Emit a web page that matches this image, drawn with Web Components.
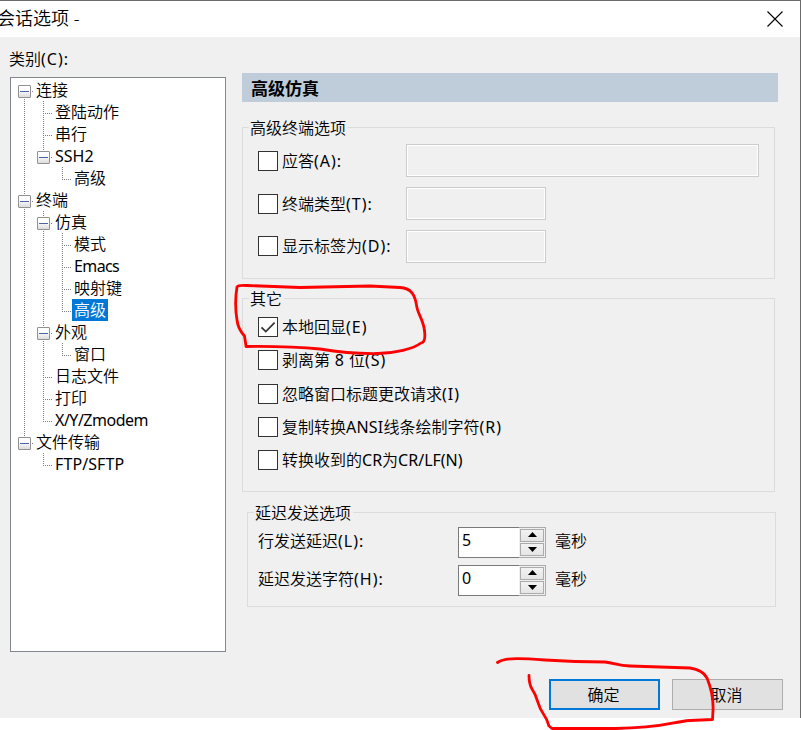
<!DOCTYPE html>
<html lang="zh-CN">
<head>
<meta charset="utf-8">
<title>会话选项</title>
<style>
body{margin:0;width:801px;height:730px;overflow:hidden;background:#fff;color:#000;position:relative;
font:350 16px/22px "Noto Sans","Noto Sans CJK SC",sans-serif}
</style>
</head>
<body>
<session-dialog></session-dialog>
<pen-marks></pen-marks>
<script>
const define=(name,html,setup)=>customElements.define(name,class extends HTMLElement{
  connectedCallback(){
    if(this.shadowRoot)return;
    const t=document.createElement('template');t.innerHTML=html;
    const r=this.attachShadow({mode:'open'});r.append(t.content.cloneNode(true));
    if(setup)setup(this,r);
  }
});

/* One tree line. guides: one letter per 19px column.
   n none, v through, t tee, e elbow, then box variants: d down, b both, u up */
define('tree-row',`<style>
:host{display:flex;height:22px;white-space:nowrap}
i{flex:none;display:flex;width:19px;height:22px;position:relative;
 --v:repeating-linear-gradient(#808080 0 1px,transparent 1px 2px);
 --h:repeating-linear-gradient(90deg,#808080 0 1px,transparent 1px 2px);
 background-repeat:no-repeat}
.v,.b{background-image:var(--v);background-size:1px 22px;background-position:9px 0}
.t{background-image:var(--v),var(--h);background-size:1px 22px,9px 1px;background-position:9px 0,9px 12px}
.e{background-image:var(--v),var(--h);background-size:1px 13px,9px 1px;background-position:9px 0,9px 12px}
.d{background-image:var(--v);background-size:1px 11px;background-position:9px 12px}
.u{background-image:var(--v);background-size:1px 11px;background-position:9px 0}
b{box-sizing:border-box;width:13px;height:13px;margin:6px 0 0 3px;border:1px solid #919191;border-radius:1px;
 background:linear-gradient(#4b63a7,#4b63a7) center/9px 1px no-repeat,linear-gradient(#fff 35%,#dcdcdc)}
b+u{width:1px;height:1px;background:#808080;margin:12px 0 0 1px}
span{padding:0 2px;line-height:23px;height:22px}
:host([selected]) span{background:#0078d7;color:#fff}
</style><slot name="g"></slot><span><slot></slot></span>`,(h,r)=>{
  const s=r.querySelector('slot[name=g]');
  for(const c of h.getAttribute('guides')){
    const i=document.createElement('i');i.className=c;
    if('dbu'.includes(c))i.innerHTML='<b></b><u></u>';
    s.before(i);
  }
  s.remove();
});

define('group-box',`<style>
:host{display:block;box-sizing:border-box;border:1px solid #dcdcdc}
h2{font:inherit;width:max-content;margin:-11px 0 0 6px;padding:0 2px 0 1px;background:#f0f0f0;height:22px;line-height:22px}
</style><h2></h2><slot></slot>`,(h,r)=>{r.querySelector('h2').textContent=h.getAttribute('label')});

define('check-option',`<style>
:host{display:flex;gap:4px;height:20px;line-height:20px;white-space:nowrap}
i{box-sizing:border-box;flex:none;width:20px;height:20px;border:1px solid #333;background:#fff}
svg{display:none;width:18px;height:18px}
:host([checked]) svg{display:block}
</style><i><svg viewBox="0 0 18 18"><path d="M2.5 9.3 6.8 13.5 15.6 4.7" fill="none" stroke="#333" stroke-width="1.7"/></svg></i><span><slot></slot></span>`);

define('text-box',`<style>
:host{display:block;box-sizing:border-box;height:33px;border:1px solid #ccc;box-shadow:inset 0 0 0 1px #fff}
</style>`);

define('spin-box',`<style>
:host{display:grid;grid-template-columns:61px 27px;width:88px;height:31px;font-weight:400}
.n{border:1px solid #7a7a7a;border-right:0;background:#fff;padding-left:3px;line-height:25px}
.s{display:grid;grid-template-rows:13px 13px;gap:1px;padding:1px;border:1px solid #ababab;border-left:0}
button{all:unset;box-sizing:border-box;width:24px;border:1px solid #ababab;background:linear-gradient(#f3f3f3,#e5e5e5);display:grid;justify-items:center;align-items:start;padding-top:2px}
button+button{padding-top:3px}
svg{width:9px;height:5px;display:block}
</style><div class="n"><slot></slot></div><div class="s">
<button><svg viewBox="0 0 9 5"><path d="M0 5 4.5 0 9 5Z"/></svg></button>
<button><svg viewBox="0 0 9 5"><path d="M0 0 4.5 5 9 0Z"/></svg></button></div>`);

define('push-button',`<style>
:host{box-sizing:border-box;display:grid;place-items:center;width:111px;height:31px;border:1px solid #adadad;background:#e1e1e1}
:host([primary]){border:2px solid #0078d7}
span{margin-right:2px}
</style><span><slot></slot></span>`);

define('session-dialog',`<style>
:host{display:flex;flex-direction:column;box-sizing:border-box;width:801px;height:718px;border:solid #6b6b6b;border-width:1px 1px 0 0;background:#f0f0f0}
header{display:flex;justify-content:space-between;height:36px;background:#fff;line-height:35px;font-size:18px}
header span{margin-left:-3px}
header svg{width:16px;height:16px;margin:10px 17px 0 0}
main{display:grid;grid-template-columns:216px 536px;column-gap:16px;padding:0 0 0 10px}
.cat{height:40px;line-height:44px;margin-left:-1px}
u{text-decoration:none;letter-spacing:1px;font-weight:400}
.a{letter-spacing:.5px}
.l{font-weight:400}
.tree{box-sizing:border-box;height:575px;border:1px solid #828790;background:#fff;padding:1px 0 0 4px}
.pane{padding-top:36px}
h1{margin:0 0 25px;height:29px;background:#bfccda;font-size:17px;line-height:31px;padding-left:9px}
group-box{width:533px}
.r{display:grid;grid-template-columns:148px auto;justify-content:start;height:33px;margin:0 0 10px 15px}
check-option.k{margin:7px 0 0}
.g2 check-option{margin-left:15px}
.d{display:grid;grid-template-columns:200px 88px auto;margin-left:10px;height:31px;line-height:29px}
.d em{font-style:normal;padding-left:9px}
footer{display:flex;gap:12px;justify-content:flex-end;padding:27px 17px 0 0}
</style>
<header><span>会话选项 -</span><svg viewBox="0 0 16 16"><path d="M.5.5 15.5 15.5M15.5.5.5 15.5" stroke="#000" stroke-width="1.1"/></svg></header>
<main><div><div class="cat">类别<u>(C):</u></div><div class="tree">
<tree-row guides="d">连接</tree-row>
<tree-row guides="vt">登陆动作</tree-row>
<tree-row guides="vt">串行</tree-row>
<tree-row guides="vu" class="l">SSH2</tree-row>
<tree-row guides="vne">高级</tree-row>
<tree-row guides="b">终端</tree-row>
<tree-row guides="vb">仿真</tree-row>
<tree-row guides="vvt">模式</tree-row>
<tree-row guides="vvt" class="l" style="letter-spacing:-.6px">Emacs</tree-row>
<tree-row guides="vvt">映射键</tree-row>
<tree-row guides="vve" selected>高级</tree-row>
<tree-row guides="vb">外观</tree-row>
<tree-row guides="vve">窗口</tree-row>
<tree-row guides="vt">日志文件</tree-row>
<tree-row guides="vt">打印</tree-row>
<tree-row guides="ve" class="l" style="letter-spacing:-.5px">X/Y/Zmodem</tree-row>
<tree-row guides="u">文件传输</tree-row>
<tree-row guides="ne" class="l" style="letter-spacing:.1px">FTP/SFTP</tree-row>
</div></div>
<div class="pane"><h1>高级仿真</h1>
<group-box label="高级终端选项" style="height:152px">
<div class="r" style="margin-top:5px"><check-option class="k">应答<u>(A):</u></check-option><text-box style="width:353px"></text-box></div>
<div class="r"><check-option class="k">终端类型<u>(T):</u></check-option><text-box style="width:140px"></text-box></div>
<div class="r"><check-option class="k" style="margin-top:6px">显示标签为<u>(D):</u></check-option><text-box style="width:140px"></text-box></div>
</group-box>
<group-box class="g2" label="其它" style="height:194px;margin-top:19px">
<check-option checked style="margin-top:7px">本地回显<u>(E)</u></check-option>
<check-option style="margin-top:13px">剥离第<u class="a"> 8 </u>位<u>(S)</u></check-option>
<check-option style="margin-top:14px">忽略窗口标题更改请求<u>(I)</u></check-option>
<check-option style="margin-top:13px">复制转换<u class="a" style="letter-spacing:.2px">ANSI</u>线条绘制字符<u>(R)</u></check-option>
<check-option style="margin-top:13px">转换收到的<u style="letter-spacing:0">CR</u>为<u style="letter-spacing:0">CR/LF(N)</u></check-option>
</group-box>
<group-box label="延迟发送选项" style="height:95px;width:529px;margin:20px 0 0 5px">
<div class="d" style="margin-top:3px"><span>行发送延迟<u>(L):</u></span><spin-box>5</spin-box><em>毫秒</em></div>
<div class="d" style="margin-top:7px"><span>延迟发送字符<u>(H):</u></span><spin-box>0</spin-box><em>毫秒</em></div>
</group-box>
</div></main>
<footer><push-button primary>确定</push-button><push-button>取消</push-button></footer>`);

define('pen-marks',`<style>:host{position:absolute;inset:0;pointer-events:none}svg{display:block}</style>
<svg width="801" height="730" fill="none" stroke="#f00" stroke-width="2.8" stroke-linejoin="round" stroke-linecap="round">
<path d="M246 346 L244.500 336 Q238 329 237 320 C235 308 235 299 237 287 Q238 285 247 285.500 L300 287.500 L370 286 L400 287.500 C412 288 415 296 416.500 305 C417 313 424 321 424.500 331 Q426 342 421 343 C413 349 395 353 378 353.500 Q350 354 320 349 Q290 346 246 346.500"/>
<path d="M497.500 662.500 C505 657 525 658.500 545 660 Q575 662 605 662 C615 663 618 666 630 666 L690 668 Q703 670 707 678 C711 688 713.500 700 713 710 L712.500 719.500 L690 720.500 C670 722 665 728 615 728.500 L552 728.500 L549 726 Q547 719 544 715 C536 704 539 699 532 689 Q529 684 529 675.500"/>
</svg>`);
</script>
</body>
</html>
